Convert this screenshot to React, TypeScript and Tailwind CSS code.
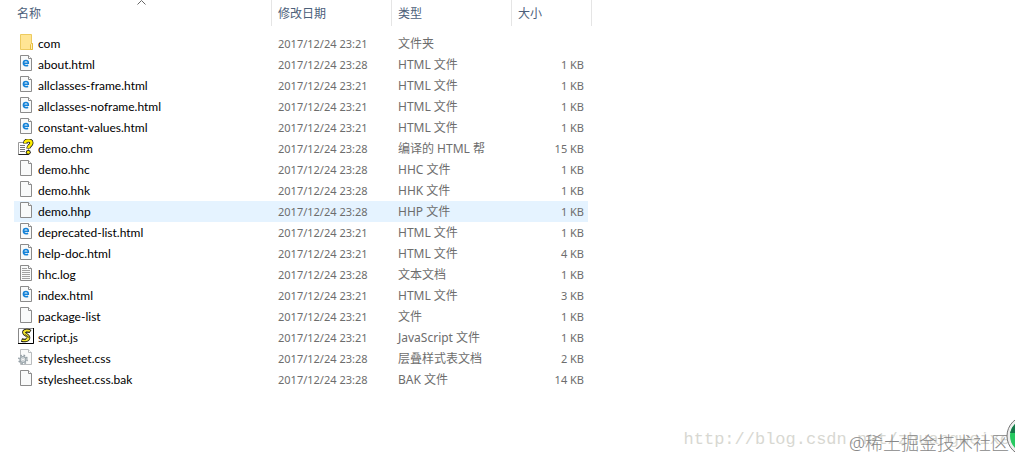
import React from "react";

type Kind = "folder" | "html" | "chm" | "blank" | "log" | "js" | "css";

interface Entry {
  name: string;
  date: string;
  type: string;
  size: string;
  kind: Kind;
  active?: boolean;
}

const entries: Entry[] = [
  { name: "com", date: "2017/12/24 23:21", type: "文件夹", size: "", kind: "folder" },
  { name: "about.html", date: "2017/12/24 23:28", type: "HTML 文件", size: "1 KB", kind: "html" },
  { name: "allclasses-frame.html", date: "2017/12/24 23:21", type: "HTML 文件", size: "1 KB", kind: "html" },
  { name: "allclasses-noframe.html", date: "2017/12/24 23:21", type: "HTML 文件", size: "1 KB", kind: "html" },
  { name: "constant-values.html", date: "2017/12/24 23:21", type: "HTML 文件", size: "1 KB", kind: "html" },
  { name: "demo.chm", date: "2017/12/24 23:28", type: "编译的 HTML 帮", size: "15 KB", kind: "chm" },
  { name: "demo.hhc", date: "2017/12/24 23:28", type: "HHC 文件", size: "1 KB", kind: "blank" },
  { name: "demo.hhk", date: "2017/12/24 23:28", type: "HHK 文件", size: "1 KB", kind: "blank" },
  { name: "demo.hhp", date: "2017/12/24 23:28", type: "HHP 文件", size: "1 KB", kind: "blank", active: true },
  { name: "deprecated-list.html", date: "2017/12/24 23:21", type: "HTML 文件", size: "1 KB", kind: "html" },
  { name: "help-doc.html", date: "2017/12/24 23:21", type: "HTML 文件", size: "4 KB", kind: "html" },
  { name: "hhc.log", date: "2017/12/24 23:28", type: "文本文档", size: "1 KB", kind: "log" },
  { name: "index.html", date: "2017/12/24 23:21", type: "HTML 文件", size: "3 KB", kind: "html" },
  { name: "package-list", date: "2017/12/24 23:21", type: "文件", size: "1 KB", kind: "blank" },
  { name: "script.js", date: "2017/12/24 23:21", type: "JavaScript 文件", size: "1 KB", kind: "js" },
  { name: "stylesheet.css", date: "2017/12/24 23:28", type: "层叠样式表文档", size: "2 KB", kind: "css" },
  { name: "stylesheet.css.bak", date: "2017/12/24 23:28", type: "BAK 文件", size: "14 KB", kind: "blank" },
];

function Page({ light = false }: { light?: boolean }) {
  const line = light ? "#b9bcbe" : "#8b8b8b";
  return (
    <>
      <path d="M2.5.5h8l3 3v12h-11z" fill="#f9fafa" stroke={line} />
      <path d="M10.5.5v3h3" fill="#fff" stroke={line} />
    </>
  );
}

function FileIcon({ kind }: { kind: Kind }) {
  return (
    <svg viewBox="0 0 16 16" className="size-4 shrink-0" aria-hidden="true">
      {kind === "folder" && (
        <>
          <path d="M2.5.5h11v9h1v6h-12z" fill="#ffe594" stroke="#edcb5f" />
          <path d="M12.5 15.5v-5l1-1h1v6z" fill="#fff0b8" stroke="#e8bd3f" />
        </>
      )}
      {kind === "html" && (
        <>
          <Page />
          <path d="M5.700 8.200h4.600c.2-2-1-2.700-2.300-2.700-1.500 0-2.600 1-2.600 2.600s1.100 2.600 2.700 2.600c.8 0 1.500-.2 2-.5" fill="none" stroke="#1583d8" strokeWidth="1.600" />
        </>
      )}
      {kind === "blank" && <Page />}
      {kind === "log" && (
        <>
          <Page />
          <path d="M4 3.500h5M4 5.500h8M4 7.500h8M4 9.500h8M4 11.500h8M4 13.500h8" stroke="#a2a2a2" />
        </>
      )}
      {kind === "chm" && (
        <>
          <path d="M.5 3.500h8l2 2v10h-10z" fill="#fff" stroke="#999" />
          <path d="M2 6.500h5M2 8.500h5M2 10.500h5M2 12.500h5" stroke="#777" />
          <path d="M.5 15.500h10" stroke="#222" />
          <path d="M7 4.500c0-2.200 1.500-3 3.300-3 2.200 0 3.200 1 3.200 2.500 0 2.500-3.200 2.500-3.200 5.500" fill="none" stroke="#111" strokeWidth="4" />
          <circle cx="10.300" cy="13.300" r="2.400" fill="#111" />
          <path d="M7 4.300c0-2.200 1.500-2.800 3.300-2.800 2.200 0 3.200 1 3.200 2.500 0 2.500-3.200 2.500-3.200 5.200" fill="none" stroke="#ffef00" strokeWidth="2.500" />
          <circle cx="10.300" cy="13.200" r="1.500" fill="#ffef00" />
        </>
      )}
      {kind === "js" && (
        <>
          <path d="M.5.5h15v15H.5z" fill="#fff" stroke="#888" />
          <path d="M0 15.500h15.500V0" fill="none" stroke="#000" />
          <path d="M12.500 3.500c-2-1.300-6-1.300-6.500.5-.5 2.500 5 3 4.500 6-.5 2.500-4 3-7 2" fill="none" stroke="#111" strokeWidth="3.600" />
          <path d="M12 3.300c-2-1-5.500-1-6 .7-.5 2.500 5 3 4.500 6-.5 2.300-4 2.700-6.500 1.800" fill="none" stroke="#f4e62e" strokeWidth="2.200" />
          <path d="M8 4h4M4 11.500h4M7 6.500l4 3" stroke="#111" strokeWidth=".7" />
        </>
      )}
      {kind === "css" && (
        <>
          <Page light />
          <circle cx="5" cy="10.500" r="4.200" fill="none" stroke="#929da4" strokeWidth="1.500" strokeDasharray="1.650 1.650" />
          <circle cx="5" cy="10.500" r="2.900" fill="#e7ebed" stroke="#9aa5ab" strokeWidth="1.400" />
          <circle cx="5" cy="10.500" r="1.200" fill="#fff" stroke="#a9b1b5" strokeWidth=".5" />
        </>
      )}
    </svg>
  );
}

export default function App() {
  return (
    <main className="relative min-h-screen overflow-hidden bg-white font-['Noto_Sans','Noto_Sans_CJK_SC',sans-serif] text-xs text-[#6d6d6d]">
      <div className="pl-[14px]">
        <table className="table-fixed border-separate border-spacing-0 text-left">
          <colgroup>
            <col className="w-[258px]" />
            <col className="w-[120px]" />
            <col className="w-[120px]" />
            <col className="w-[76px]" />
            <col className="w-1" />
          </colgroup>
          <thead className="text-[#4c607a]">
            <tr className="h-[26px]">
              <th className="relative border-r border-[#e5e5e5] p-0 pt-[2px] pl-[3px] font-normal">
                名称
                <svg viewBox="0 0 9 5" className="absolute top-0 left-[123px] h-[5px] w-[9px]" aria-hidden="true">
                  <path d="M.5 4.500l4-4 4 4" fill="none" stroke="#666" />
                </svg>
              </th>
              <th className="border-r border-[#e5e5e5] p-0 pt-[2px] pl-[6px] font-normal">修改日期</th>
              <th className="border-r border-[#e5e5e5] p-0 pt-[2px] pl-[6px] font-normal">类型</th>
              <th colSpan={2} className="border-r border-[#e5e5e5] p-0 pt-[2px] pl-[6px] font-normal">大小</th>
            </tr>
          </thead>
          <tbody>
            <tr className="h-[7px]" aria-hidden="true">
              <td colSpan={5} className="p-0" />
            </tr>
            {entries.map((entry) => {
              const tint = entry.active ? "bg-[#e5f3ff]" : "";
              return (
                <tr key={entry.name} className="h-[21px] leading-5">
                  <td className={`p-0 pl-1 ${tint}`}>
                    <div className="flex h-[21px] items-start gap-1 pt-px text-black">
                      <FileIcon kind={entry.kind} />
                      <span className="font-['Lato','Noto_Sans',sans-serif] leading-5">{entry.name}</span>
                    </div>
                  </td>
                  <td className={`p-0 pl-[6px] text-[11px] whitespace-nowrap ${tint}`}>{entry.date}</td>
                  <td className={`p-0 pl-[6px] whitespace-nowrap ${tint}`}>{entry.type}</td>
                  <td className={`p-0 pr-1 text-right text-[11px] whitespace-nowrap ${tint}`}>{entry.size}</td>
                  <td className="p-0" />
                </tr>
              );
            })}
          </tbody>
        </table>
      </div>
      <div className="absolute right-[5px] bottom-[7px] font-['Liberation_Mono','Noto_Sans_CJK_SC',monospace] text-[17px] leading-6 text-[#d8d8d2]">
        http://blog.csdn.net/zhuangweixe
      </div>
      <div className="absolute right-[6px] bottom-1 text-lg leading-6 font-light text-[#888]">@稀土掘金技术社区</div>
      <svg viewBox="0 0 16 50" className="absolute right-0 bottom-0 h-[50px] w-4" aria-hidden="true">
        <circle cx="28" cy="27" r="20" fill="#eee" stroke="#777" />
        <circle cx="28" cy="27" r="17" fill="#26c960" />
        <path d="M11 24a17 17 0 0 1 5-9v9z" fill="#16774a" />
      </svg>
    </main>
  );
}
